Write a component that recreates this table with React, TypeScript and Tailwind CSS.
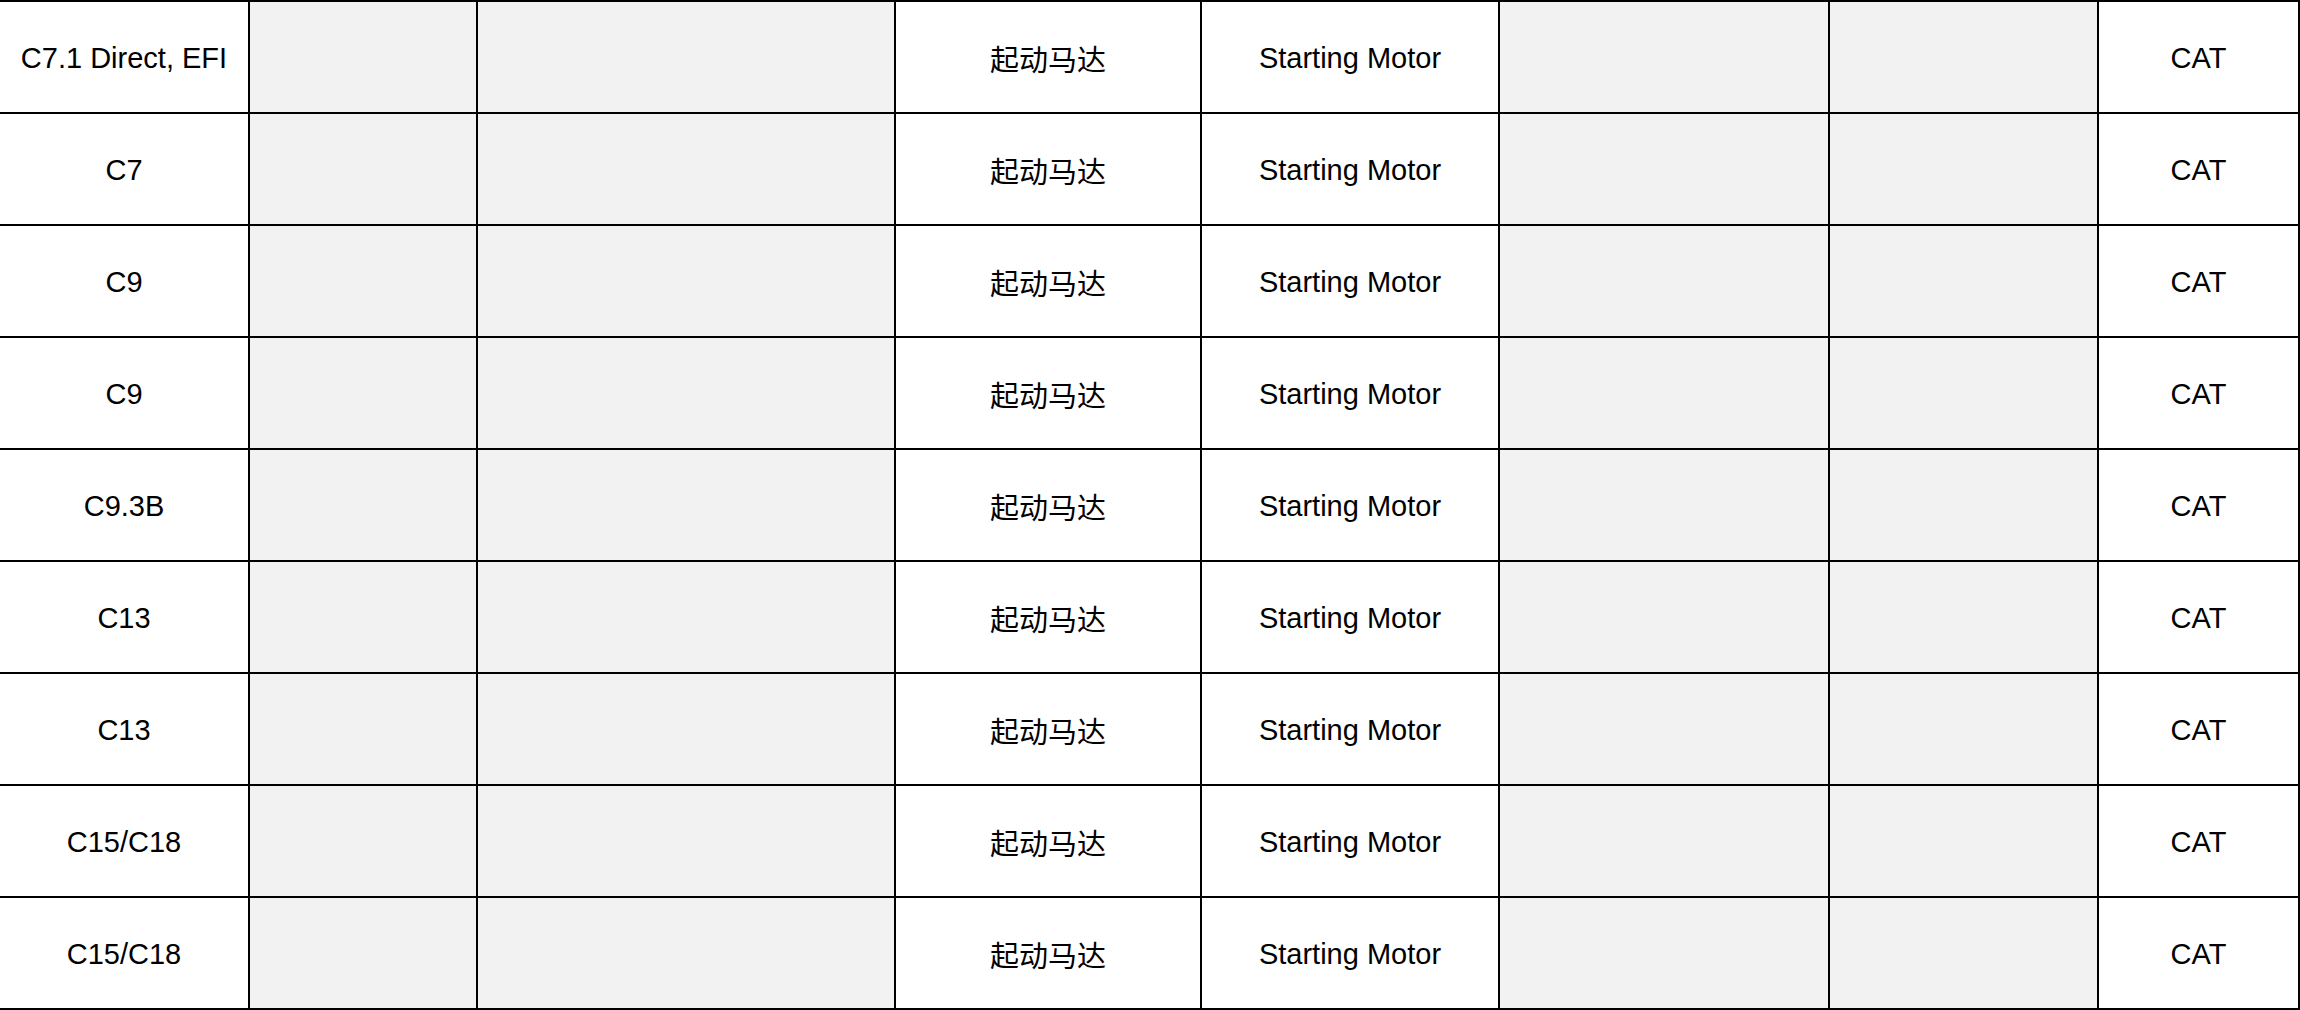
import React from "react";

const models = ["C7.1 Direct, EFI", "C7", "C9", "C9", "C9.3B", "C13", "C13", "C15/C18", "C15/C18"];

export default function App() {
  return (
    <div
      className="grid w-[2300px] h-[1010px] bg-black pt-[2px] pr-[2px] pb-[2px] gap-[2px] grid-cols-[248px_226px_416px_304px_296px_328px_267px_199px] auto-rows-[110px] text-[29px] text-black"
      style={{ fontFamily: '"Liberation Sans", Arial, "Noto Sans CJK SC", sans-serif' }}
    >
      {models.map((m, i) => (
        <React.Fragment key={i}>
          <div className="bg-white flex items-center justify-center pt-[4px]">{m}</div>
          <div className="bg-[#f2f2f2]" />
          <div className="bg-[#f2f2f2]" />
          <div className="bg-white flex items-center justify-center pt-[4px]" style={{ fontFamily: '"Noto Sans CJK SC", sans-serif' }}>起动马达</div>
          <div className="bg-white flex items-center justify-center pt-[4px]">Starting Motor</div>
          <div className="bg-[#f2f2f2]" />
          <div className="bg-[#f2f2f2]" />
          <div className="bg-white flex items-center justify-center pt-[4px]">CAT</div>
        </React.Fragment>
      ))}
    </div>
  );
}
